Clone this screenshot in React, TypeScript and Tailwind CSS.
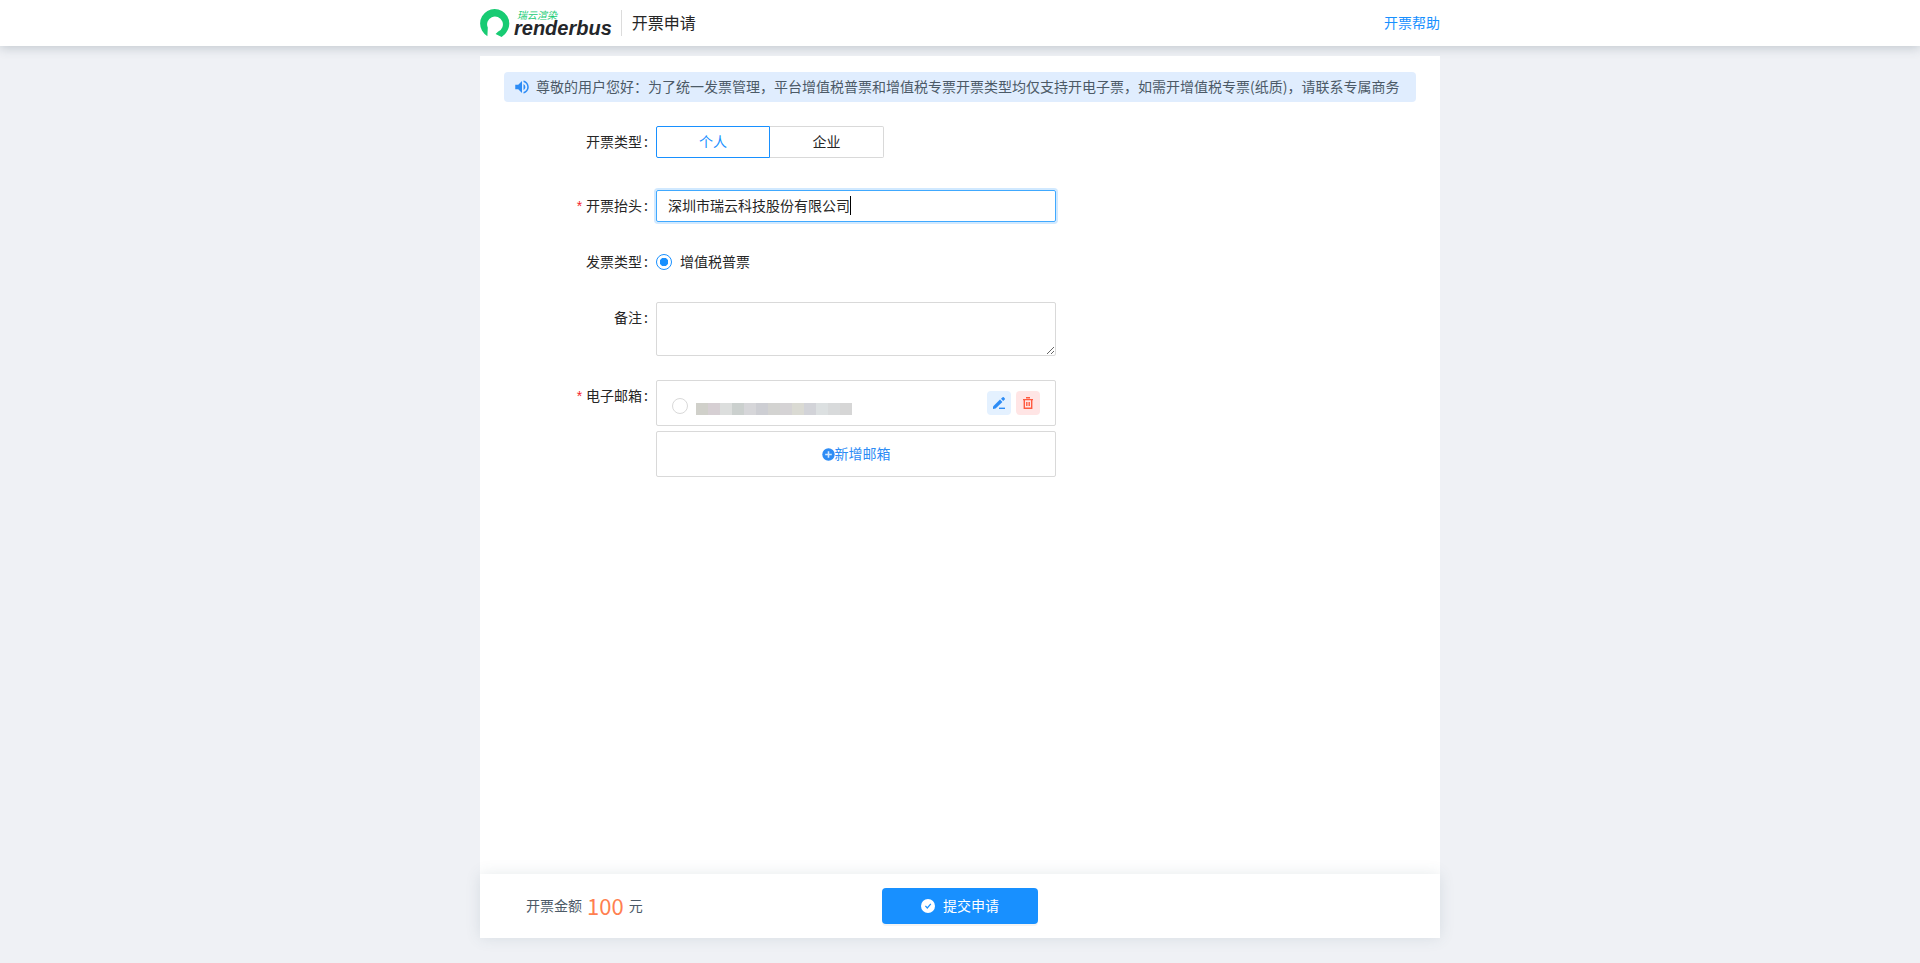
import React, { useState } from 'react'
import clsx from 'clsx'
import { MdVolumeUp } from 'react-icons/md'

const notice =
  '尊敬的用户您好：为了统一发票管理，平台增值税普票和增值税专票开票类型均仅支持开电子票，如需开增值税专票(纸质)，请联系专属商务'

const maskColors = [
  'bg-[#d0d0ca]',
  'bg-[#d6cfd3]',
  'bg-[#dcdedd]',
  'bg-[#cbd0ce]',
  'bg-[#d6d6d9]',
  'bg-[#cdced3]',
  'bg-[#d3d3d1]',
  'bg-[#d5d3d5]',
  'bg-[#dadad3]',
  'bg-[#d2d3d8]',
  'bg-[#dce0e1]',
  'bg-[#d8dadb]',
  'bg-[#d6d6d6]',
]

const Logo: React.FC = () => (
  <a href="#" aria-label="renderbus" className="flex items-center">
    <svg width="30" height="30" viewBox="0 0 30 30" fill="#18cb73">
      <path d="M7.4 28.2A14.6 14.6 0 1 1 29.3 15.5C29.3 20.6 26.6 25.6 21.6 28.9L15.6 26L18.2 23.6A7.9 7.9 0 1 0 7.8 19.6Z" />
    </svg>
    <span className="ml-1 flex flex-col italic">
      <span className="pl-[3px] text-[10px] leading-[10px] text-[#18cb73]">瑞云渲染</span>
      <span className="font-['Liberation_Sans',sans-serif] text-xl leading-4 font-bold text-[#24262a]">renderbus</span>
    </span>
  </a>
)

const Pencil: React.FC = () => (
  <svg width="12" height="12" viewBox="0 0 12 12" fill="#2d8cf5">
    <path d="M0 12V9.4L7 2.6L9.4 5L2.6 11.6Z" />
    <path d="M8 1.7L9.6 0.2Q10.2 -0.2 10.8 0.3L11.7 1.2Q12.2 1.8 11.7 2.4L10.2 3.9Z" />
    <path d="M6 10.6H12V12H6Z" />
  </svg>
)

const Trash: React.FC = () => (
  <svg width="10" height="12" viewBox="0 0 10 12" fill="none" stroke="#ff5a40" strokeWidth="1.4">
    <path d="M0 2.6H10M3 0.7H7M1.3 2.6V11.3H8.7V2.6M3.8 5V9M6.2 5V9" />
  </svg>
)

const FormItem: React.FC<{
  label: string
  htmlFor?: string
  required?: boolean
  children: React.ReactNode
}> = ({ label, htmlFor, required, children }) => (
  <div className="flex items-start">
    <label htmlFor={htmlFor} className="w-[152px] shrink-0 pr-2 text-right leading-[30px]">
      {required && <span className="mr-1 font-['Liberation_Sans',sans-serif] leading-none text-[#f5222d]">*</span>}
      {label}
      <span className="ml-0.5">:</span>
    </label>
    <div className="w-[400px]">{children}</div>
  </div>
)

export default function App() {
  const [kind, setKind] = useState('个人')
  const [title, setTitle] = useState('深圳市瑞云科技股份有限公司')

  return (
    <div className="flex min-h-screen flex-col bg-[#eff1f5] font-['Noto_Sans_CJK_SC',sans-serif] text-sm text-[#262626]">
      <header className="bg-white shadow-[0_2px_10px_rgba(60,80,90,0.25)]">
        <div className="mx-auto flex h-[46px] max-w-[960px] items-center">
          <Logo />
          <h1 className="ml-[9px] flex h-[26px] items-center border-l border-[#dcdcdc] pb-0.5 pl-2.5 text-base">开票申请</h1>
          <a href="#" className="ml-auto pb-0.5 text-[#1890ff]">
            开票帮助
          </a>
        </div>
      </header>

      <main className="mx-auto mt-2.5 mb-[25px] flex w-full max-w-[960px] flex-1 flex-col bg-white">
        <form className="flex flex-1 flex-col" onSubmit={(e) => e.preventDefault()}>
          <div className="flex-1 px-6 pt-4">
            <div className="mb-6 flex h-[30px] items-center gap-[5px] rounded bg-[#e0edfe] pl-[9px] text-[#4c5a67]">
              <MdVolumeUp size={18} className="shrink-0 text-[#2d8cf5]" />
              <p className="pb-0.5">{notice}</p>
            </div>

            <div className="flex flex-col gap-6">
              <div className="mb-2">
                <FormItem label="开票类型">
                  <div className="flex">
                    {['个人', '企业'].map((name, i) => (
                      <button
                        key={name}
                        type="button"
                        onClick={() => setKind(name)}
                        className={clsx(
                          'h-8 w-[114px] border pb-0.5',
                          i === 0 ? 'rounded-l-xs' : 'rounded-r-xs border-l-0',
                          kind === name ? 'border-[#1890ff] text-[#1890ff]' : 'border-[#d9d9d9]'
                        )}
                      >
                        {name}
                      </button>
                    ))}
                  </div>
                </FormItem>
              </div>

              <FormItem label="开票抬头" htmlFor="title" required>
                <div className="relative">
                  <input
                    id="title"
                    value={title}
                    onChange={(e) => setTitle(e.target.value)}
                    className="block h-8 w-full rounded-xs border border-[#40a9ff] px-[11px] pb-0.5 caret-transparent shadow-[0_0_0_2px_rgba(24,144,255,0.2)] outline-none"
                  />
                  <span className="absolute top-1.5 left-[194px] h-[19px] w-px bg-black" />
                </div>
              </FormItem>

              <FormItem label="发票类型">
                <label className="flex h-8 items-center gap-2">
                  <input
                    type="radio"
                    name="invoice"
                    defaultChecked
                    className="size-4 appearance-none rounded-full border border-[#1890ff] bg-white bg-[radial-gradient(circle,#1890ff_4px,transparent_4.5px)]"
                  />
                  <span className="pb-0.5">增值税普票</span>
                </label>
              </FormItem>

              <FormItem label="备注" htmlFor="remark">
                <textarea id="remark" className="block h-[54px] w-full rounded-xs border border-[#d9d9d9] px-[11px] py-1 outline-none" />
              </FormItem>

              <FormItem label="电子邮箱" htmlFor="email" required>
                <div className="flex h-[46px] items-center rounded-xs border border-[#d9d9d9] px-[15px]">
                  <input
                    id="email"
                    type="radio"
                    name="email"
                    className="mt-[6px] size-4 appearance-none rounded-full border border-[#d9d9d9] bg-white"
                  />
                  <div className="mt-3 ml-2 flex">
                    {maskColors.map((color) => (
                      <span key={color} className={clsx('size-3', color)} />
                    ))}
                  </div>
                  <button type="button" aria-label="编辑" className="ml-auto flex size-6 items-center justify-center rounded bg-[#e4f1ff]">
                    <Pencil />
                  </button>
                  <button type="button" aria-label="删除" className="ml-[5px] flex size-6 items-center justify-center rounded bg-[#ffe5e5]">
                    <Trash />
                  </button>
                </div>
                <button
                  type="button"
                  className="mt-[5px] flex h-[46px] w-full items-center justify-center rounded-xs border border-[#d9d9d9] text-[#2d8cf5]"
                >
                  <svg width="13" height="13" viewBox="0 0 13 13">
                    <circle cx="6.5" cy="6.5" r="6.2" fill="#2d8cf5" />
                    <path d="M3.2 6.5H9.8M6.5 3.2V9.8" stroke="#d5e8fd" strokeWidth="1.6" />
                  </svg>
                  <span className="pb-0.5">新增邮箱</span>
                </button>
              </FormItem>
            </div>
          </div>

          <footer className="grid h-16 grid-cols-[402px_auto_1fr] items-center bg-white shadow-[0_0_14px_rgba(60,90,110,0.13)]">
            <p className="flex items-center pb-0.5 pl-[46px] text-[#4c5a67]">
              开票金额
              <span className="mx-[5px] text-[22px] leading-8 text-[#ff7f50]">100</span>元
            </p>
            <button
              type="submit"
              className="flex h-9 w-[156px] items-center justify-center gap-2 rounded bg-[#1890ff] text-white shadow-[0_2px_0_rgba(0,0,0,0.045)]"
            >
              <svg width="14" height="14" viewBox="0 0 14 14">
                <circle cx="7" cy="7" r="7" fill="#fff" />
                <path d="M4.4 6.8L6.3 9L9.8 4.8" fill="none" stroke="#1890ff" strokeWidth="1.2" />
              </svg>
              <span className="pb-0.5">提交申请</span>
            </button>
          </footer>
        </form>
      </main>
    </div>
  )
}
